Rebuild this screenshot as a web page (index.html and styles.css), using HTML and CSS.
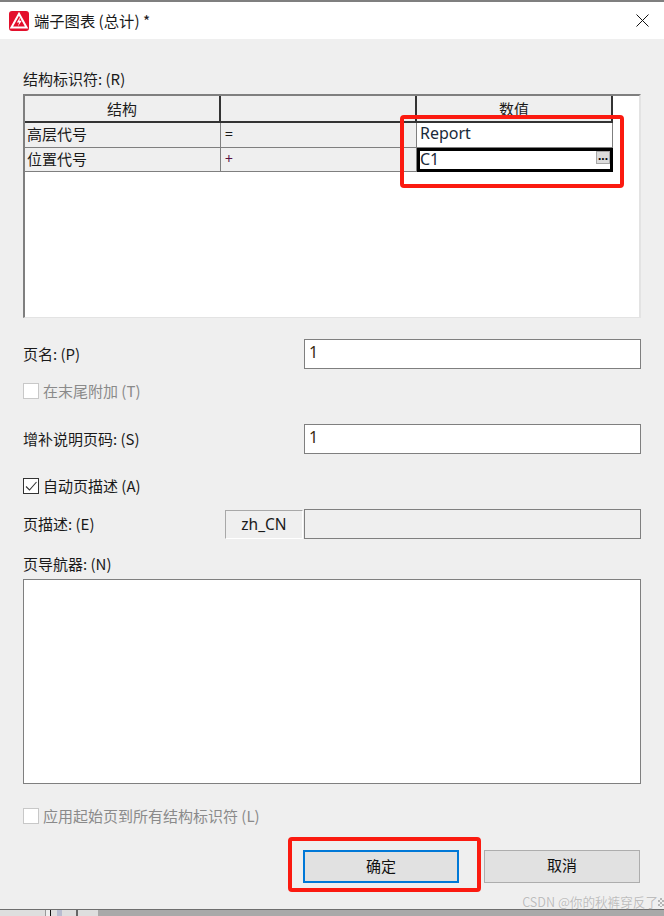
FILE: index.html
```html
<!DOCTYPE html>
<html lang="zh-CN">
  <head>
    <meta charset="UTF-8" />
    <title>端子图表 (总计) *</title>
    <link rel="stylesheet" href="styles.css">
  </head>
  <body>
    <div class="dialog">
      <div class="titlebar">
        <svg class="app-icon" viewBox="0 0 20 20" width="20" height="20">
          <rect width="20" height="20" rx="3" fill="#e3102c" />
          <path d="M10 2.8 L17.6 16.6 H2.4 Z" fill="none" stroke="#fff" stroke-width="2" stroke-linejoin="miter" />
          <path d="M11.2 6 L7.8 11.4 H10.2 L8.8 15.4 L12.8 9.8 H10.4 Z" fill="#fff" />
        </svg>
        <span class="title">端子图表 (总计) *</span>
        <svg class="close" viewBox="0 0 13 13" width="13" height="13">
          <path d="M0.5 0.5 L12.5 12.5 M12.5 0.5 L0.5 12.5" stroke="#111" stroke-width="1" fill="none" />
        </svg>
      </div>
      <div class="content">
        <div class="label table-label">结构标识符: (R)</div>
        <div class="table-box">
          <div class="grid">
            <div class="head">结构</div>
            <div class="head"></div>
            <div class="head head-last">数值</div>
            <div class="cell">高层代号</div>
            <div class="cell sign">=</div>
            <div class="cell value">Report</div>
            <div class="cell">位置代号</div>
            <div class="cell sign plus">+</div>
            <div class="cell value active">C1<span class="more">...</span></div>
          </div>
        </div>

        <div class="row row-name">
          <span class="label">页名: (P)</span>
          <div class="input">1</div>
        </div>
        <div class="check disabled check-tail"><span class="box"></span>在末尾附加 (T)</div>
        <div class="row row-extra">
          <span class="label">增补说明页码: (S)</span>
          <div class="input">1</div>
        </div>
        <div class="check check-auto">
          <span class="box">
            <svg viewBox="0 0 14 14" width="14" height="14">
              <path d="M2 7.5 L5.5 11 L12.5 3" fill="none" stroke="#333" stroke-width="1.1" />
            </svg>
          </span>
          自动页描述 (A)
        </div>
        <div class="row row-desc">
          <span class="label">页描述: (E)</span>
          <div class="lang">zh_CN</div>
          <div class="input input-off"></div>
        </div>
        <div class="label nav-label">页导航器: (N)</div>
        <div class="nav-box"></div>
        <div class="check disabled check-apply"><span class="box"></span>应用起始页到所有结构标识符 (L)</div>
        <div class="buttons">
          <button class="btn btn-default">确定</button>
          <button class="btn">取消</button>
        </div>
      </div>
    </div>
    <div class="desk">
      <span class="seg seg-a"></span>
      <span class="seg seg-b"></span>
      <span class="seg seg-c"></span>
      <span class="seg seg-d"></span>
      <span class="seg seg-e"></span>
      <span class="seg seg-f"></span>
      <span class="seg seg-g"></span>
      <span class="seg seg-h"></span>
      <span class="seg seg-i"></span>
      <span class="seg seg-j"></span>
    </div>

    <div class="mark mark-value"></div>
    <div class="mark mark-ok"></div>
    <div class="watermark">CSDN @你的秋裤穿反了<span class="mosaic"></span></div>
  </body>
</html>
```

FILE: styles.css
```css
* {
  box-sizing: border-box;
}
html,
body {
  margin: 0;
  padding: 0;
}
body {
  width: 664px;
  height: 916px;
  overflow: hidden;
  position: relative;
  background: #c4c4c4;
  color: #1a1a1a;
  font-family: "Noto Sans CJK SC", "Noto Sans", sans-serif;
  font-size: 15px;
}
.dialog {
  height: 910px;
  background: #efefef;
  border-top: 2px solid #7f7f7f;
  border-bottom: 1px solid #6e6e6e;
}
.titlebar {
  height: 37px;
  background: #fff;
  display: flex;
  align-items: center;
  padding: 0 15px 0 9px;
}
.app-icon {
  flex: none;
}
.title {
  margin: 0 0 2px 5px;
  line-height: 20px;
  font-size: 15.3px;
  flex: 1;
}
.content {
  padding: 30px 23px 0;
}
.label {
  line-height: 20px;
}
.table-box {
  margin-top: 5px;
  width: 618px;
  height: 224px;
  background: #fff;
  border: 2px solid #7f7f7f;
  border-bottom-color: #e3e3e3;
  border-right-color: #e3e3e3;
  border-bottom-width: 1px;
}
.grid {
  width: 588px;
  display: grid;
  grid-template-columns: 196px 196px 196px;
  grid-template-rows: 27px 25px 24px;
}
.head {
  background: #efefef;
  border-right: 2px solid #333;
  border-bottom: 2px solid #333;
  text-align: center;
  line-height: 25px;
}
.cell {
  background: #efefef;
  border-right: 1px solid #7f7f7f;
  border-bottom: 1px solid #7f7f7f;
  padding-left: 2px;
  line-height: 21px;
}
.sign {
  padding-left: 4px;
  font-size: 14px;
}
.plus {
  color: #5a1040;
}
.value {
  background: #fff;
  padding-left: 3px;
  font-family: "Noto Sans", sans-serif;
  font-size: 16px;
  color: #1a2a3a;
}
.active {
  border: 3px solid #000;
  padding-left: 0;
  line-height: 16px;
  display: flex;
  justify-content: space-between;
}
.more {
  width: 14px;
  height: 13px;
  background: #dcdcdc;
  border: 1px solid #a8a8a8;
  font-size: 12px;
  font-weight: 700;
  line-height: 8px;
  text-align: center;
  color: #000;
}
.row {
  display: flex;
  align-items: center;
}
.row .label {
  flex: 1;
}
.input {
  width: 337px;
  height: 30px;
  background: #fff;
  border: 1px solid #7f7f7f;
  padding-left: 4px;
  line-height: 24px;
  font-family: "Noto Sans", sans-serif;
  font-size: 16px;
  color: #3a2a10;
}
.input-off {
  background: #efefef;
}
.row-name {
  margin-top: 21px;
}
.row-extra {
  margin-top: 23px;
}
.row-desc {
  margin-top: 13px;
}
.lang {
  width: 78px;
  height: 29px;
  margin-right: 1px;
  border-top: 1px solid #a8a8a8;
  border-left: 1px solid #a8a8a8;
  border-right: 1px solid #fff;
  border-bottom: 1px solid #fff;
  text-align: center;
  line-height: 26px;
  font-family: "Noto Sans", sans-serif;
  font-size: 15.5px;
}
.check {
  display: flex;
  align-items: center;
  line-height: 20px;
}
.box {
  width: 16px;
  height: 16px;
  margin-right: 4px;
  background: #fff;
  border: 1px solid #333;
  display: flex;
}
.disabled {
  color: #8a8a8a;
}
.disabled .box {
  border-color: #c8c8c8;
}
.check-tail {
  margin-top: 12px;
}
.check-auto {
  margin-top: 22px;
}
.nav-label {
  margin-top: 15px;
}
.nav-box {
  margin-top: 5px;
  width: 618px;
  height: 205px;
  background: #fff;
  border: 1px solid #7f7f7f;
}
.check-apply {
  margin-top: 22px;
}
.buttons {
  margin-top: 24px;
  padding-right: 1px;
  display: flex;
  justify-content: flex-end;
  gap: 25px;
}
.btn {
  width: 156px;
  height: 33px;
  background: #e1e1e1;
  border: 1px solid #adadad;
  font: inherit;
  line-height: 28px;
  color: #111;
  padding: 0 0 3px;
}
.btn-default {
  border: 2px solid #0078d7;
}
.desk {
  display: flex;
  height: 6px;
}
.seg {
  background: #dedede;
}
.seg-a { width: 45px; }
.seg-b { width: 1px; background: #999; }
.seg-c { width: 4px; background: #eee; }
.seg-d { width: 1px; background: #111; }
.seg-e { width: 6px; }
.seg-f { width: 5px; background: #b8bcd0; }
.seg-g { width: 14px; }
.seg-h { width: 2px; background: #666; }
.seg-i { width: 20px; }
.seg-j { flex: 1; background: #a9a9a9; }
.mark {
  position: absolute;
  border: 4px solid #fb1a10;
  border-radius: 4px;
}
.mark-value {
  left: 400px;
  top: 115px;
  width: 224px;
  height: 73px;
}
.mark-ok {
  left: 288px;
  top: 837px;
  width: 193px;
  height: 55px;
}
.watermark {
  position: absolute;
  right: 0;
  top: 894px;
  display: flex;
  align-items: center;
  font-size: 12.6px;
  line-height: 16px;
  color: #bdbdbd;
  text-shadow: 0 0 1px #fff;
  white-space: nowrap;
}
.mosaic {
  width: 6px;
  height: 9px;
  background: repeating-conic-gradient(#b5b5b5 0 25%, #efefef 0 50%) 0 0 / 4px 4px;
}
```
